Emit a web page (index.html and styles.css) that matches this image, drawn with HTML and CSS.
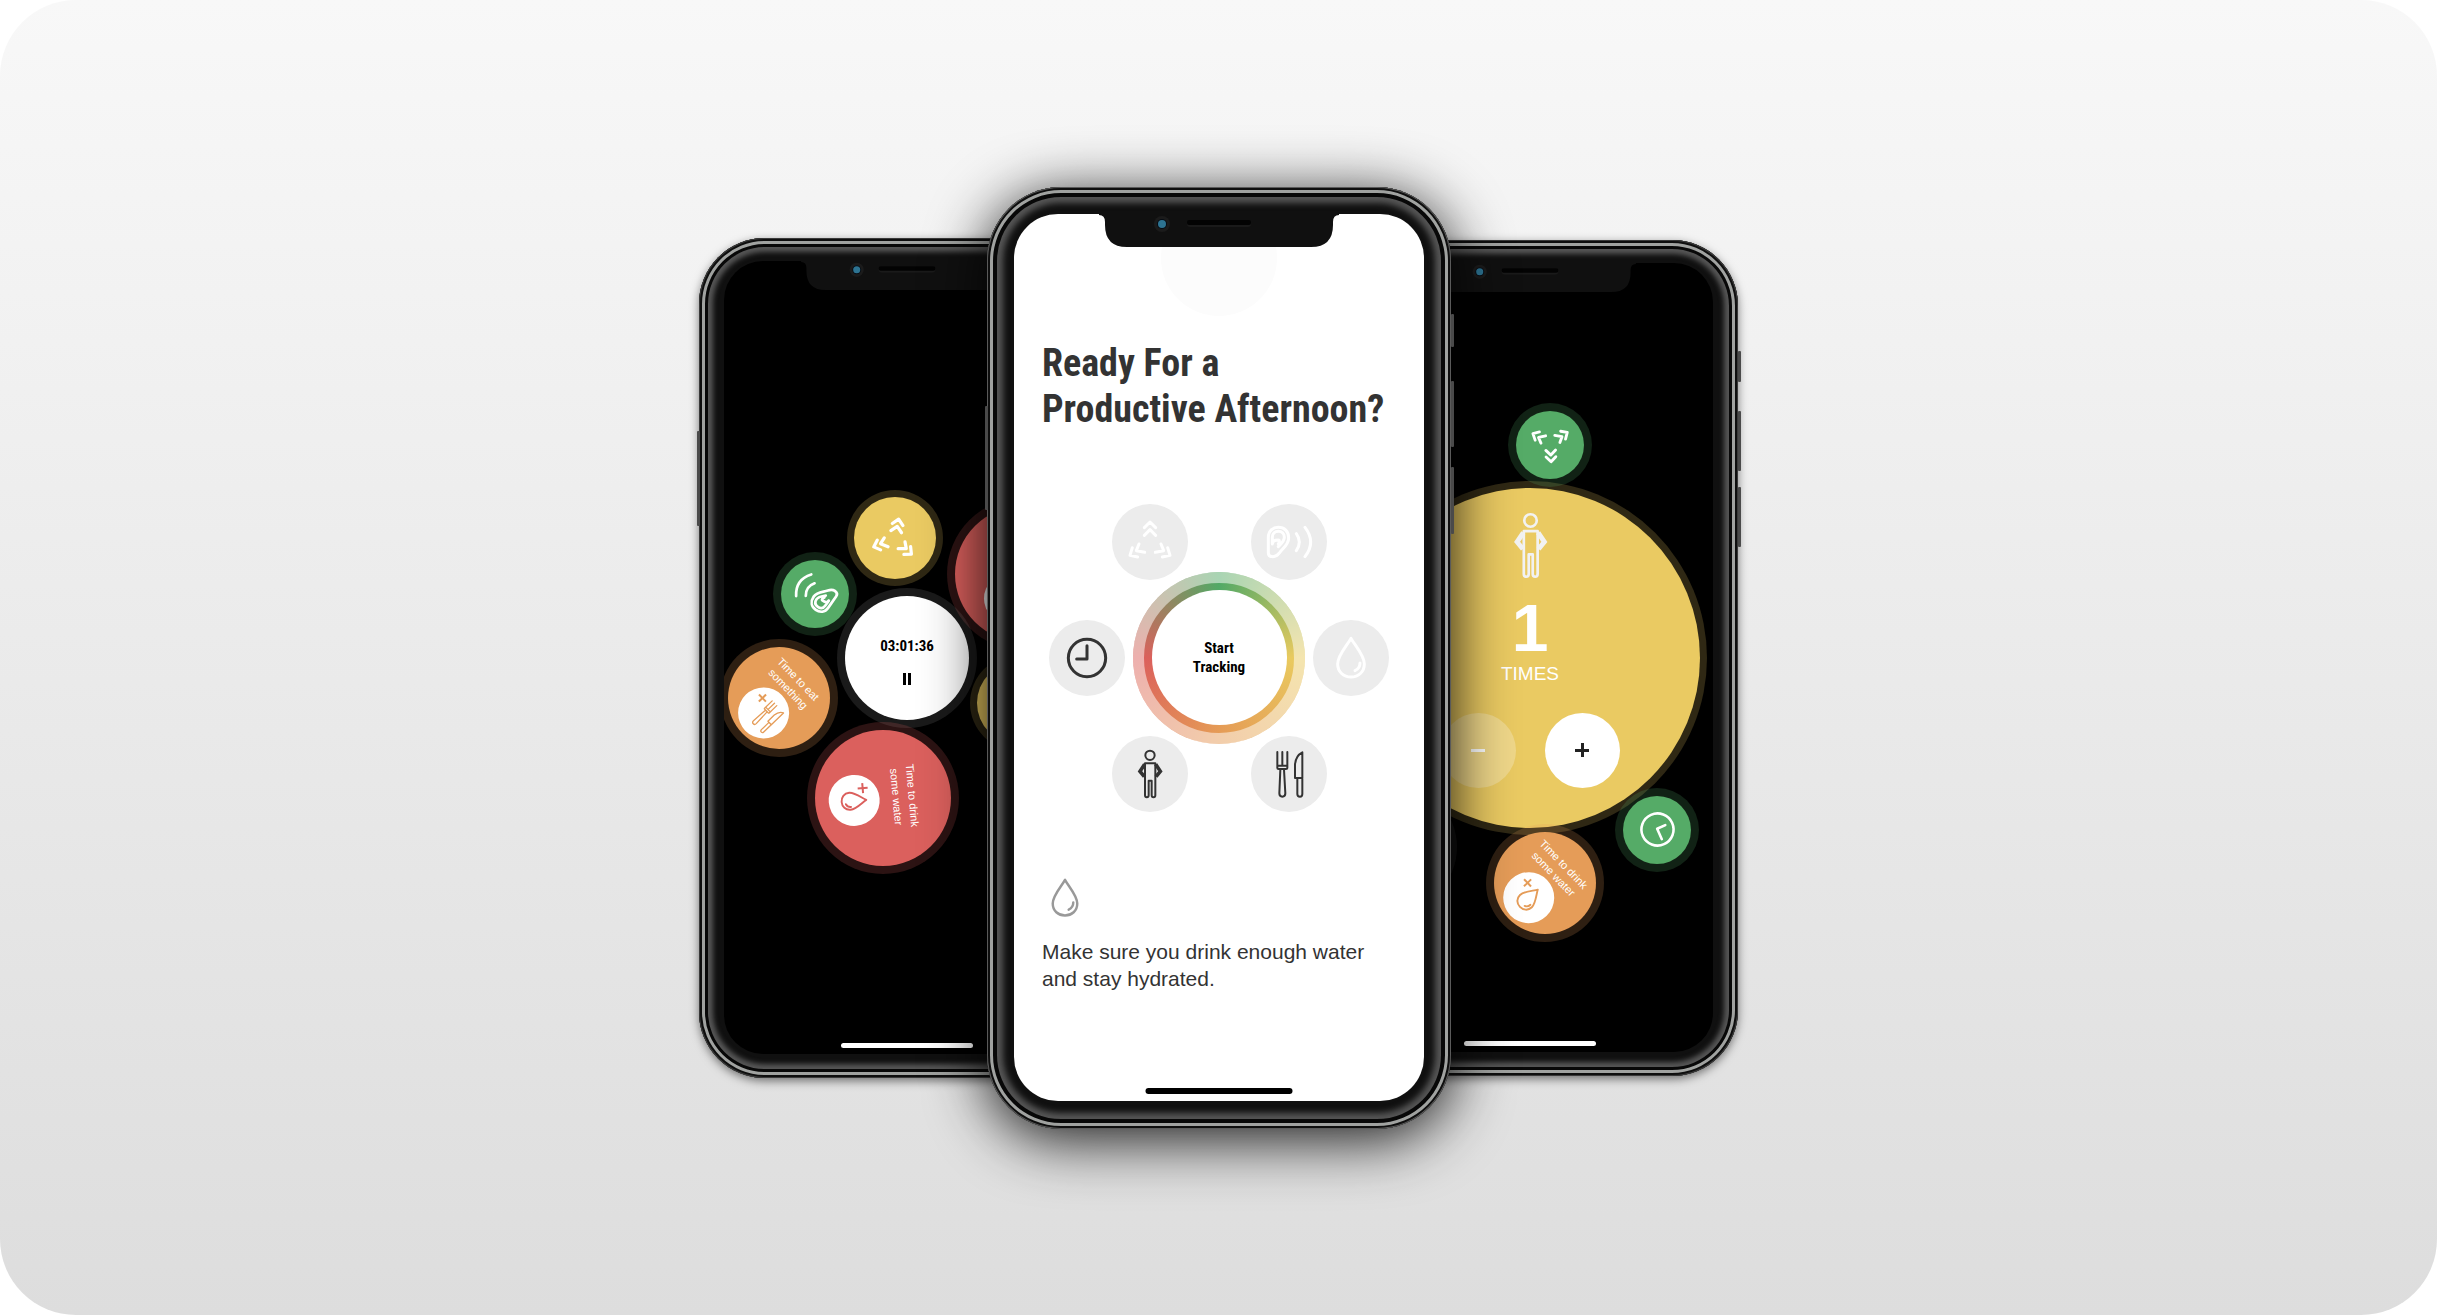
FILE: index.html
```html
<!DOCTYPE html>
<html lang="en">
<head>
<meta charset="utf-8">
<meta name="viewport" content="width=device-width, initial-scale=1">
<title>Productive Afternoon</title>
<link rel="stylesheet" href="styles.css">
</head>
<body>
<svg class="sprite" aria-hidden="true">
  <symbol id="spread" viewBox="-75 -75 150 150">
    <path d="M-17-43 0-60 17-43M-17-20 0-37 17-20M-53 17-60 40-37 45M-33 6-41 26-16 31M53 17 60 40 37 45M33 6 41 26 16 31"/>
  </symbol>
  <symbol id="ear" viewBox="-75 -75 150 150">
    <path d="M-62-14C-62-34-48-44-32-44C-14-44-1-32-1-12C-1 8-18 18-28 32C-34 40-40 44-48 44C-56 44-62 40-62 32Z"/>
    <path d="M-50 6V-14C-50-26-42-32-32-32C-22-32-14-26-14-14C-14-2-24 6-32 14M-49 4C-49-4-42-6-32-6C-28-6-28 0-32 6M22-25Q40 0 22 26M48-44Q82 0 48 44"/>
  </symbol>
  <symbol id="drop" viewBox="-75 -75 150 150">
    <path d="M0-59C-10-40-40-8-40 18C-40 42-22 57 0 57C22 57 40 42 40 18C40-8 10-40 0-59ZM27 15C27 26 21 34 12 38"/>
  </symbol>
  <symbol id="clock" viewBox="-75 -75 150 150">
    <circle r="56"/><path d="M0-37V3H-31"/>
  </symbol>
  <symbol id="person" viewBox="-75 -75 150 150">
    <circle cy="-56" r="14"/>
    <path d="M-15-32V64C-15 72-4 72-4 64V20H5V64C5 72 16 72 16 64V-32Z"/>
    <path class="arm" d="M-16-29-30-8-17 8M17-29 31-8 18 8"/>
  </symbol>
  <symbol id="cutlery" viewBox="-75 -75 150 150">
    <path d="M-35-66V-18Q-35-15-31-15H-9Q-5-15-5-18V-66M-20-66V-26M-35-25H-5M-26-13-29 58Q-29 68-20 68Q-11 68-11 58L-15-13"/>
    <path d="M40-65Q20-55 18-28V12H40ZM25 14V60Q25 68 33 68Q40 68 40 60V14"/>
  </symbol>
  <symbol id="notch" viewBox="0 0 240 34">
    <path class="notch-body" d="M0 0H240V1Q234 1 234 8V11Q234 33 212 33H28Q6 33 6 11V8Q6 1 0 1Z"/>
    <circle cx="63" cy="10" r="8" fill="#1b1b1b"/>
    <circle cx="63" cy="10" r="5" fill="#050c14"/>
    <circle cx="63" cy="10" r="4" fill="#2d7391"/>
    <rect x="88" y="6" width="64" height="7" rx="3" fill="#1a1a1a"/>
    <rect x="88" y="6" width="64" height="5" rx="2" fill="#030303"/>
  </symbol>
</svg>

<main class="stage">
  <section class="phone phone-side phone-left" aria-label="Session timer">
    <i class="key key-power"></i>
    <div class="screen dark">
      <svg class="notch" aria-hidden="true"><use href="#notch"/></svg>
      <div class="bubble red later"><span class="disc disc-edge"></span></div>
      <div class="bubble yellow peek"></div>
      <button class="bubble yellow move" aria-label="Move"><svg class="icon"><use href="#spread"/></svg></button>
      <button class="bubble green listen" aria-label="Listen"><svg class="icon"><use href="#ear"/></svg></button>
      <div class="bubble white timer">
        <time class="condensed">03:01:36</time>
        <button class="pause" aria-label="Pause"></button>
      </div>
      <div class="bubble orange eat">
        <div class="reminder tilt">
          <p>Time to eat<br>something</p>
          <button class="disc" aria-label="Log a meal"><span class="add"></span><svg class="icon"><use href="#cutlery"/></svg></button>
        </div>
      </div>
      <div class="bubble red drink">
        <div class="reminder sideways">
          <p>Time to drink<br>some water</p>
          <button class="disc" aria-label="Log a drink"><span class="add"></span><svg class="icon"><use href="#drop"/></svg></button>
        </div>
      </div>
      <span class="home"></span>
    </div>
  </section>

  <section class="phone phone-front" aria-label="Start tracking">
    <i class="key key-power"></i>
    <i class="key key-mute"></i><i class="key key-up"></i><i class="key key-down"></i>
    <div class="screen light">
      <svg class="notch" aria-hidden="true"><use href="#notch"/></svg>
      <span class="glow"></span>
      <h1 class="condensed">Ready For a<br>Productive Afternoon?</h1>
      <div class="dial">
        <div class="pair near top">
          <button class="option off" aria-label="Move"><svg class="icon"><use href="#spread"/></svg></button>
          <button class="option off" aria-label="Listen"><svg class="icon"><use href="#ear"/></svg></button>
        </div>
        <div class="pair far middle">
          <button class="option" aria-label="Time"><svg class="icon"><use href="#clock"/></svg></button>
          <button class="option off" aria-label="Water"><svg class="icon"><use href="#drop"/></svg></button>
        </div>
        <div class="pair near bottom">
          <button class="option fine" aria-label="Posture"><svg class="icon"><use href="#person"/></svg></button>
          <button class="option fine" aria-label="Food"><svg class="icon"><use href="#cutlery"/></svg></button>
        </div>
        <button class="start"><span class="condensed">Start<br>Tracking</span></button>
      </div>
      <div class="tip">
        <svg class="icon" aria-hidden="true"><use href="#drop"/></svg>
        <p>Make sure you drink enough water and stay hydrated.</p>
      </div>
      <span class="home"></span>
    </div>
  </section>

  <section class="phone phone-side phone-right" aria-label="Posture count">
    <i class="key key-mute"></i><i class="key key-up"></i><i class="key key-down"></i>
    <div class="screen dark">
      <svg class="notch" aria-hidden="true"><use href="#notch"/></svg>
      <div class="bubble ghost"></div>
      <div class="bubble yellow counter">
        <svg class="icon" aria-hidden="true"><use href="#person"/></svg>
        <strong>1</strong>
        <span class="unit">TIMES</span>
        <div class="steps">
          <button class="step less" aria-label="Less"></button>
          <button class="step more" aria-label="More"></button>
        </div>
      </div>
      <button class="bubble green stretch" aria-label="Move"><svg class="icon"><use href="#spread"/></svg></button>
      <button class="bubble green clock" aria-label="Time"><svg class="icon"><use href="#clock"/></svg></button>
      <div class="bubble orange water">
        <div class="reminder tilt">
          <p>Time to drink<br>some water</p>
          <button class="disc" aria-label="Log a drink"><span class="add"></span><svg class="icon"><use href="#drop"/></svg></button>
        </div>
      </div>
      <span class="home"></span>
    </div>
  </section>
</main>
</body>
</html>
```
FILE: styles.css
```css
* { box-sizing: border-box; }

body {
  margin: 0;
  background: #fff;
  font-family: "Liberation Sans", Arial, sans-serif;
}

h1, p { margin: 0; }

button {
  padding: 0;
  border: 0;
  background: none;
  color: inherit;
  font: inherit;
}

.sprite { position: absolute; width: 0; height: 0; }

.condensed {
  font-family: "Roboto Condensed", "Open Sans Condensed", Roboto, sans-serif;
  font-weight: 700;
}

.stage {
  display: flex;
  align-items: center;
  justify-content: center;
  min-height: 100vh;
  border-radius: 76px;
  background: linear-gradient(#f8f8f8, #dddddd);
  overflow: hidden;
}

/* Icons */
.icon {
  display: block;
  flex: none;
  width: 50px;
  height: 50px;
  fill: none;
  stroke: currentColor;
  stroke-width: 9;
  stroke-linecap: round;
  stroke-linejoin: round;
}
.arm { stroke-width: 11; stroke-linejoin: miter; stroke-linecap: butt; }
.notch-body { fill: #101010; }

/* Handsets */
.phone {
  position: relative;
  flex: none;
  background: #101010;
}
.phone-front {
  z-index: 1;
  margin: 0 -129px 0 -128px;
  padding: 27px 27px 28px;
  border-radius: 74px;
  box-shadow:
    inset 0 0 0 1px #5a5a5a,
    inset 0 0 0 3px #0e0e0e,
    inset 0 0 0 6px #a0a2a0,
    inset 0 0 0 10px #080808,
    inset 0 0 6px 16px #565656,
    0 10px 60px rgba(0, 0, 0, .9);
}
.phone-side {
  padding: 23px 25px 24px;
  border-radius: 66px;
  box-shadow:
    inset 0 0 0 1px #3a3a3a,
    inset 0 0 0 3px #0e0e0e,
    inset 0 0 0 6px #a0a2a0,
    inset 0 0 0 9px #080808,
    inset 0 0 5px 14px #565656,
    0 3px 10px rgba(0, 0, 0, .5);
}

.screen { position: relative; overflow: hidden; }
.light {
  z-index: 0;
  display: flex;
  flex-direction: column;
  width: 410px;
  height: 887px;
  padding: 126px 28px 0;
  border-radius: 44px;
  background: #fff;
  color: #333;
}
.dark {
  width: 366px;
  height: 793px;
  border-radius: 39px;
  background: #000;
  color: #fff;
}
.phone-right .dark { height: 789px; }

.notch {
  position: absolute;
  top: 0;
  left: 50%;
  width: 240px;
  height: 34px;
  transform: translateX(-50%);
}
.dark .notch { width: 214px; height: 30px; }

.glow {
  position: absolute;
  top: -14px;
  left: 50%;
  z-index: -1;
  width: 116px;
  height: 116px;
  border-radius: 50%;
  background: #fcfcfc;
  transform: translateX(-50%);
}

.home {
  position: absolute;
  bottom: 6px;
  left: 50%;
  width: 132px;
  height: 5px;
  border-radius: 3px;
  background: #fff;
  transform: translateX(-50%);
}
.light .home { bottom: 7px; width: 147px; height: 6px; background: #000; }

.key {
  position: absolute;
  width: 3px;
  background: #4a4a4a;
  border-radius: 1px;
}
.key-power { left: -2px; top: 219px; height: 104px; }
.key-mute, .key-up, .key-down { right: -3px; }
.key-mute { top: 127px; height: 33px; }
.key-up { top: 194px; height: 66px; }
.key-down { top: 280px; height: 67px; }
.phone-side .key-power { top: 193px; height: 95px; }
.phone-side .key-mute { top: 111px; height: 31px; }
.phone-side .key-up { top: 171px; height: 60px; }
.phone-side .key-down { top: 247px; height: 60px; }

/* Front screen */
h1 { font-size: 38px; line-height: 46px; white-space: nowrap; }

.dial {
  display: grid;
  grid-template-rows: repeat(3, 76px);
  row-gap: 40px;
  justify-items: center;
  margin-top: 72px;
}
.pair { display: flex; }
.top { grid-area: 1 / 1; }
.middle { grid-area: 2 / 1; }
.bottom { grid-area: 3 / 1; }
.near { gap: 63px; }
.far { gap: 188px; }
.option {
  display: grid;
  place-items: center;
  width: 76px;
  height: 76px;
  border-radius: 50%;
  background: #ececec;
}
.off { color: #fff; }
.fine .icon { stroke-width: 6; }

.start {
  position: relative;
  display: grid;
  place-items: center;
  place-self: center;
  grid-area: 1 / 1 / 4 / 2;
  width: 172px;
  height: 172px;
  border-radius: 50%;
  background: conic-gradient(#52a966, #e9ca5f 25%, #e59b56 50%, #db605c 75%, #52a966);
}
.start::before {
  content: "";
  position: absolute;
  inset: 0;
  border: 11px solid rgba(255, 255, 255, .5);
  border-radius: 50%;
}
.start span {
  display: grid;
  place-items: center;
  align-content: center;
  width: 135px;
  height: 135px;
  border-radius: 50%;
  background: #fff;
  color: #000;
  font-size: 15px;
  line-height: 19px;
}

.tip { margin-top: 63px; font-size: 21px; line-height: 27px; }
.tip .icon { width: 46px; height: 46px; stroke-width: 8; color: #999; }
.tip p { margin-top: 17px; }

/* Bubbles: --x and --y give the centre, --r the radius */
.bubble {
  position: absolute;
  top: calc(var(--y) - var(--r));
  left: calc(var(--x) - var(--r));
  display: flex;
  flex-direction: column;
  align-items: center;
  justify-content: center;
  width: calc(var(--r) * 2);
  height: calc(var(--r) * 2);
  border-radius: 50%;
}
.yellow { background: #eaca62; box-shadow: 0 0 0 7px rgba(234, 202, 98, .2); }
.green { background: #55ab67; box-shadow: 0 0 0 8px rgba(85, 171, 103, .2); }
.orange { background: #e59c58; box-shadow: 0 0 0 8px rgba(229, 156, 88, .2); color: #e59c58; }
.red { background: #db605d; box-shadow: 0 0 0 8px rgba(219, 96, 93, .2); color: #db605d; }
.white { background: #fff; box-shadow: 0 0 0 8px rgba(255, 255, 255, .1); color: #000; }
.yellow, .green { color: #fff; }

.move { --x: 171px; --y: 277px; --r: 41px; }
.move .icon { width: 48px; height: 48px; stroke-width: 10; transform: rotate(11deg); }
.listen { --x: 91px; --y: 333px; --r: 34px; }
.listen .icon { width: 45px; height: 45px; transform: rotate(215deg); }
.timer { --x: 183px; --y: 397px; --r: 62px; gap: 18px; padding-top: 6px; font-size: 15px; line-height: 18px; }
.eat { --x: 55px; --y: 437px; --r: 51px; }
.drink { --x: 159px; --y: 537px; --r: 68px; }
.later { --x: 299px; --y: 313px; --r: 68px; }
.peek { --x: 294px; --y: 442px; --r: 41px; }
.stretch { --x: 203px; --y: 182px; --r: 34px; }
.stretch .icon { width: 43px; height: 43px; stroke-width: 10; transform: rotate(178deg); }
.clock { --x: 310px; --y: 567px; --r: 34px; }
.clock .icon { width: 43px; height: 43px; transform: rotate(156deg); }
.water { --x: 198px; --y: 620px; --r: 51px; }
.ghost { --x: 45px; --y: 584px; --r: 65px; background: #101010; }
.counter { --x: 183px; --y: 395px; --r: 170px; justify-content: flex-start; padding-top: 24px; }

.pause {
  width: 8px;
  height: 12px;
  border: solid #000;
  border-width: 0 3px;
}

.reminder {
  display: flex;
  flex-direction: column;
  align-items: center;
  gap: 2px;
  padding-top: 14px;
  font-size: 11px;
  line-height: 14px;
  white-space: nowrap;
}
.reminder p { color: #fff; text-align: center; }
.tilt { transform: rotate(46deg); }
.sideways { gap: 9px; padding-top: 16px; line-height: 16px; transform: rotate(85deg); }

.disc {
  position: relative;
  display: grid;
  place-items: center;
  flex: none;
  width: 51px;
  height: 51px;
  border-radius: 50%;
  background: #fff;
}
.disc .icon { width: 32px; height: 32px; }
.eat .disc { padding-left: 10px; }
.eat .disc .icon { width: 33px; height: 33px; stroke-width: 6; }
.disc-edge { margin: 50px 28px 0 0; }

.add {
  position: absolute;
  top: 11px;
  left: 9px;
  width: 10px;
  height: 10px;
  background:
    linear-gradient(currentColor, currentColor) center / 10px 2px no-repeat,
    linear-gradient(currentColor, currentColor) center / 2px 10px no-repeat;
}

.counter .icon { width: 67px; height: 67px; stroke-width: 6; color: #f2f2f2; }
.counter strong { margin-top: 16px; font-size: 66px; line-height: 66px; }
.unit { margin-top: 2px; font-size: 19px; line-height: 22px; }
.steps { display: flex; gap: 29px; margin-top: 28px; }
.step {
  display: grid;
  place-items: center;
  width: 75px;
  height: 75px;
  border-radius: 50%;
}
.step::before {
  content: "";
  width: 14px;
  height: 14px;
  background:
    linear-gradient(currentColor, currentColor) center / 14px 3px no-repeat;
}
.less { background: rgba(255, 255, 255, .25); color: #fff; }
.more { background: #fff; color: #222; }
.more::before {
  background:
    linear-gradient(currentColor, currentColor) center / 14px 3px no-repeat,
    linear-gradient(currentColor, currentColor) center / 3px 14px no-repeat;
}
```
